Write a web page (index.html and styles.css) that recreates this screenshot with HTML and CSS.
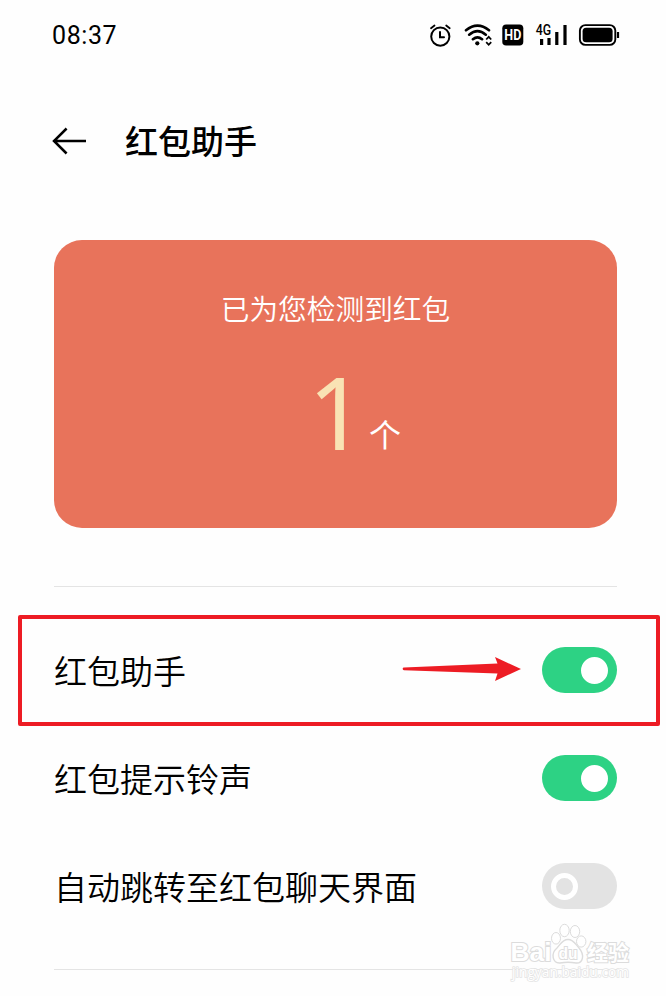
FILE: index.html
```html
<!DOCTYPE html>
<html lang="zh-CN">
<head>
<meta charset="utf-8">
<title>红包助手</title>
<link rel="stylesheet" href="styles.css">
</head>
<body>
<main class="screen">
  <div class="status">
    <span class="time">08:37</span>
    <svg class="status-icons" width="200" height="30" viewBox="0 0 200 30" fill="none" stroke="#000" aria-hidden="true">
      <g stroke-width="2" stroke-linecap="round">
        <circle cx="20.3" cy="16.6" r="9.1"/>
        <path d="M20 12v5.2h4"/>
        <path d="M11 8.3l3.5-2.8M26.2 5.5l3.5 2.8" stroke-width="1.8"/>
      </g>
      <g stroke-width="2.6" stroke-linecap="round">
        <path d="M46 10.3q11.5-9.2 23 0M49.2 14.7q8.3-7 16.6 0M52.9 19.2q4.6-3.8 9.2 0"/>
      </g>
      <circle cx="57.3" cy="23.3" r="2.1" fill="#000" stroke="none"/>
      <path d="M66.2 19.5l2.5-2.6 2.5 2.6M66.2 22.2l2.5 2.6 2.5-2.6" stroke-width="1.8"/>
      <rect x="82.3" y="4.5" width="21" height="21" rx="3.8" fill="#000" stroke="none"/>
      <text class="hd" x="84.3" y="20.3" textLength="17" lengthAdjust="spacingAndGlyphs">HD</text>
      <text class="net" x="115.8" y="15" textLength="15.4" lengthAdjust="spacingAndGlyphs">4G</text>
      <path d="M121.6 19v6.1M129 18v7.1M136.8 12v13.1M145 5v20.1" stroke-width="3.2"/>
      <rect x="159.9" y="5.1" width="35.4" height="19.8" rx="5.5" stroke-width="1.9"/>
      <rect x="162.6" y="7.8" width="30" height="14.4" rx="3.5" fill="#000" stroke="none"/>
      <path d="M198 12v6" stroke-width="2.2"/>
    </svg>
  </div>

  <header class="header">
    <svg class="back" width="36" height="30" viewBox="0 0 36 30" fill="none" stroke="#000" stroke-width="2.5" aria-hidden="true">
      <path d="M34 15H1.5M14.6 2.5L2 15l12.6 12.5"/>
    </svg>
    <h1 class="title">红包助手</h1>
  </header>

  <section class="card">
    <p class="card-label">已为您检测到红包</p>
    <p class="card-count"><span class="number">1</span><span class="unit">个</span></p>
  </section>

  <section class="settings">
    <div class="row">
      <span class="label">红包助手</span>
      <span class="switch on"><i class="knob"></i></span>
      <div class="highlight"></div>
      <svg class="arrow" width="120" height="26" viewBox="0 0 120 26" aria-hidden="true">
        <path d="M2 11.5L95.5 7.5L93 1l26 12-26 12 2.5-7.5L2 14.2a1.35 1.35 0 0 1 0-2.7z" fill="#ed1c24"/>
      </svg>
    </div>
    <div class="row">
      <span class="label">红包提示铃声</span>
      <span class="switch on"><i class="knob"></i></span>
    </div>
    <div class="row">
      <span class="label">自动跳转至红包聊天界面</span>
      <span class="switch"><i class="knob"></i></span>
    </div>
  </section>

  <svg class="watermark" width="128" height="66" viewBox="0 0 128 66" fill="#fff" stroke="#dcdcdc" aria-hidden="true">
    <text class="site" x="4" y="55.5" textLength="117" lengthAdjust="spacingAndGlyphs">jingyan.baidu.com</text>
    <g class="mark">
      <text x="2.5" y="40.3" font-size="26" textLength="41" lengthAdjust="spacingAndGlyphs">Bai</text>
      <text x="79" y="39" font-size="21" textLength="42" lengthAdjust="spacingAndGlyphs">经验</text>
    </g>
    <ellipse cx="48" cy="17.3" rx="4.5" ry="5.8"/>
    <ellipse cx="56.5" cy="9.5" rx="4.7" ry="6.2"/>
    <ellipse cx="67" cy="10.5" rx="4.7" ry="6"/>
    <ellipse cx="73.2" cy="20.5" rx="4.7" ry="5.6"/>
    <path d="M60 18.5c-6 0-7.500 5-11 8.500-7 6-4 15.500 3 15 4-.8 12-.8 16 0 7 .5 9-8 3-15-3.500-3.500-5-8.500-11-8.500z" stroke-width="1.4"/>
    <g class="mark">
      <text x="50.5" y="38" font-size="17" textLength="19" lengthAdjust="spacingAndGlyphs">du</text>
    </g>
  </svg>
</main>
</body>
</html>
```
FILE: styles.css
```css
* { box-sizing: border-box; }

body {
  margin: 0;
  background: #fefefe;
  color: #000;
  font-family: "Noto Sans CJK SC", sans-serif;
}

.screen {
  position: relative;
  height: 996px;
  padding: 0 49px 0 54px;
  overflow: hidden;
}

.status {
  display: flex;
  justify-content: space-between;
  align-items: center;
  height: 70px;
  margin: 0 -3px 0 -2px;
}

.time {
  padding-top: 2px;
  font: 25px/30px Roboto, sans-serif;
  letter-spacing: 0.6px;
}

.hd {
  font: 700 14.5px Roboto, sans-serif;
  fill: #fff;
  stroke: none;
}

.net {
  font: 500 14.7px Roboto, sans-serif;
  fill: #000;
  stroke: none;
}

.header {
  display: flex;
  align-items: center;
  gap: 37px;
  height: 142px;
  margin-left: -2px;
}

.title {
  margin: 0;
  padding-bottom: 2px;
  font-size: 33px;
  font-weight: 500;
  line-height: 46px;
}

.card {
  height: 288px;
  margin-top: 28px;
  padding-top: 47px;
  border-radius: 28px;
  background: #e8735b;
  color: #fff;
  text-align: center;
}

.card-label {
  margin: 0;
  font-size: 28.7px;
  font-weight: 350;
  line-height: 42px;
}

.card-count {
  display: flex;
  justify-content: center;
  align-items: baseline;
  gap: 3px;
  margin: 22px 0 0;
  padding-left: 38px;
  line-height: 120px;
}

.number {
  color: #f9e3b4;
  font-family: "Noto Sans", sans-serif;
  font-size: 101px;
}

.unit {
  font-size: 32px;
  transform: translateY(-3px);
}

.settings {
  margin-top: 58px;
  padding: 29px 0;
  border: solid #e4e4e4;
  border-width: 1px 0;
}

.row {
  position: relative;
  display: flex;
  justify-content: space-between;
  align-items: center;
  height: 108px;
  font-size: 33px;
  font-weight: 350;
}

.switch {
  display: flex;
  align-items: center;
  width: 75px;
  height: 46px;
  padding: 0 9px;
  border-radius: 23px;
  background: #e3e3e3;
}

.switch.on {
  justify-content: flex-end;
  background: #2dd284;
}

.knob {
  width: 27px;
  height: 27px;
  border: 5.5px solid #fff;
  border-radius: 50%;
}

.on .knob { background: #fff; }

.highlight {
  position: absolute;
  top: -1px;
  left: -36px;
  width: 642px;
  height: 111px;
  border: 4px solid #ed1c24;
  border-radius: 2px;
}

.arrow {
  position: absolute;
  top: 40px;
  left: 348px;
}

.watermark {
  position: absolute;
  top: 921px;
  left: 508px;
}

.mark {
  font-family: "Liberation Sans", "Noto Sans CJK SC", sans-serif;
  font-weight: 700;
  paint-order: stroke;
  stroke-width: 2px;
}

.site {
  font: 14px "Open Sans", sans-serif;
  paint-order: stroke;
  stroke: #e4e4e4;
  stroke-width: 1.6px;
}
```
